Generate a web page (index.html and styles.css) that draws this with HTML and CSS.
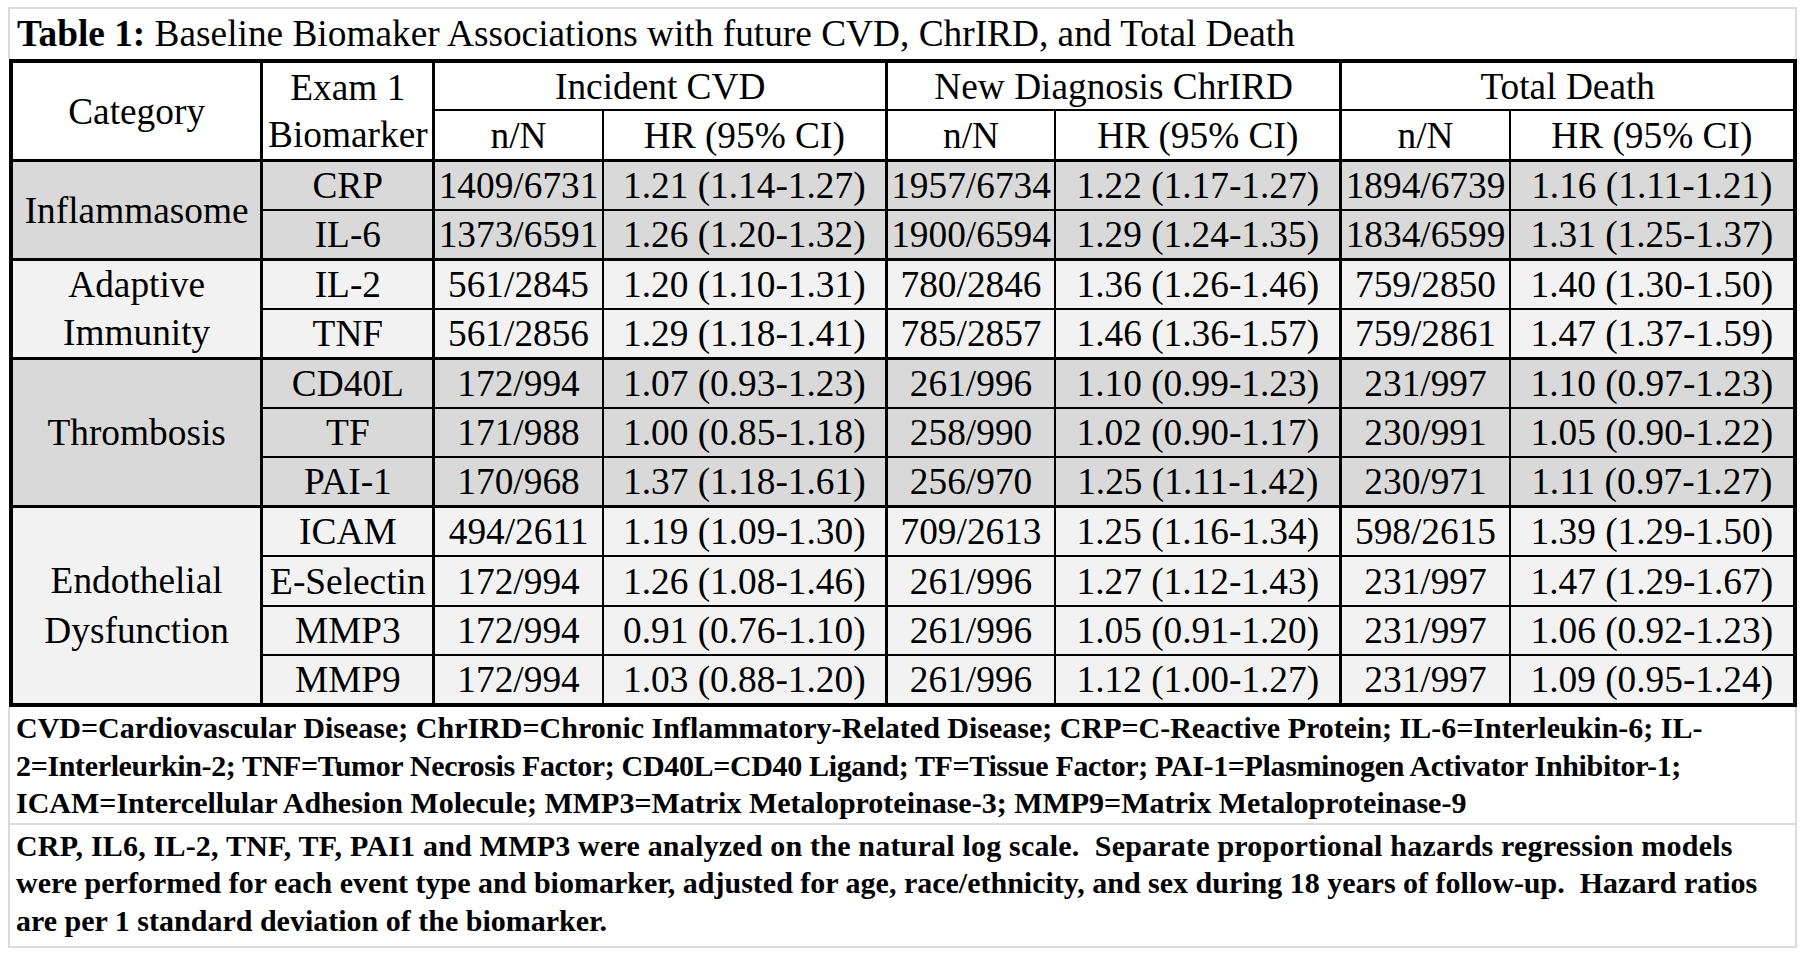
FILE: index.html
```html
<!DOCTYPE html>
<html lang="en">
<head>
<meta charset="utf-8">
<title>Table 1</title>
<link rel="stylesheet" href="styles.css">
</head>
<body>
<div class="sheet">
  <div class="title"><b>Table 1:</b> Baseline Biomaker Associations with future CVD, ChrIRD, and Total Death</div>
  <table class="data">
    <colgroup>
      <col class="c-cat"><col class="c-bio"><col class="c-n"><col class="c-hr"><col class="c-n"><col class="c-hr2"><col class="c-n"><col class="c-hr2">
    </colgroup>
    <thead>
      <tr class="h1">
        <th rowspan="2" class="hend">Category</th>
        <th rowspan="2" class="hend bio">Exam 1<br>Biomarker</th>
        <th colspan="2">Incident CVD</th>
        <th colspan="2">New Diagnosis ChrIRD</th>
        <th colspan="2" class="last">Total Death</th>
      </tr>
      <tr class="h2">
        <th class="minor hend">n/N</th><th class="hend">HR (95% CI)</th>
        <th class="minor hend">n/N</th><th class="hend">HR (95% CI)</th>
        <th class="minor hend">n/N</th><th class="hend last">HR (95% CI)</th>
      </tr>
    </thead>
    <tbody class="dark">
      <tr class="r49">
        <td rowspan="2" class="gend">Inflammasome</td>
        <td>CRP</td><td class="minor">1409/6731</td><td>1.21 (1.14-1.27)</td><td class="minor">1957/6734</td><td>1.22 (1.17-1.27)</td><td class="minor">1894/6739</td><td class="last">1.16 (1.11-1.21)</td>
      </tr>
      <tr class="r50 end">
        <td>IL-6</td><td class="minor">1373/6591</td><td>1.26 (1.20-1.32)</td><td class="minor">1900/6594</td><td>1.29 (1.24-1.35)</td><td class="minor">1834/6599</td><td class="last">1.31 (1.25-1.37)</td>
      </tr>
    </tbody>
    <tbody class="light">
      <tr class="r49">
        <td rowspan="2" class="gend pair">Adaptive<br>Immunity</td>
        <td>IL-2</td><td class="minor">561/2845</td><td>1.20 (1.10-1.31)</td><td class="minor">780/2846</td><td>1.36 (1.26-1.46)</td><td class="minor">759/2850</td><td class="last">1.40 (1.30-1.50)</td>
      </tr>
      <tr class="r50 end">
        <td>TNF</td><td class="minor">561/2856</td><td>1.29 (1.18-1.41)</td><td class="minor">785/2857</td><td>1.46 (1.36-1.57)</td><td class="minor">759/2861</td><td class="last">1.47 (1.37-1.59)</td>
      </tr>
    </tbody>
    <tbody class="dark">
      <tr class="r49">
        <td rowspan="3" class="gend">Thrombosis</td>
        <td>CD40L</td><td class="minor">172/994</td><td>1.07 (0.93-1.23)</td><td class="minor">261/996</td><td>1.10 (0.99-1.23)</td><td class="minor">231/997</td><td class="last">1.10 (0.97-1.23)</td>
      </tr>
      <tr class="r49">
        <td>TF</td><td class="minor">171/988</td><td>1.00 (0.85-1.18)</td><td class="minor">258/990</td><td>1.02 (0.90-1.17)</td><td class="minor">230/991</td><td class="last">1.05 (0.90-1.22)</td>
      </tr>
      <tr class="r50 end">
        <td>PAI-1</td><td class="minor">170/968</td><td>1.37 (1.18-1.61)</td><td class="minor">256/970</td><td>1.25 (1.11-1.42)</td><td class="minor">230/971</td><td class="last">1.11 (0.97-1.27)</td>
      </tr>
    </tbody>
    <tbody class="light">
      <tr class="r49">
        <td rowspan="4" class="gend final multi">Endothelial<br>Dysfunction</td>
        <td>ICAM</td><td class="minor">494/2611</td><td>1.19 (1.09-1.30)</td><td class="minor">709/2613</td><td>1.25 (1.16-1.34)</td><td class="minor">598/2615</td><td class="last">1.39 (1.29-1.50)</td>
      </tr>
      <tr class="r50">
        <td>E-Selectin</td><td class="minor">172/994</td><td>1.26 (1.08-1.46)</td><td class="minor">261/996</td><td>1.27 (1.12-1.43)</td><td class="minor">231/997</td><td class="last">1.47 (1.29-1.67)</td>
      </tr>
      <tr class="r49">
        <td>MMP3</td><td class="minor">172/994</td><td>0.91 (0.76-1.10)</td><td class="minor">261/996</td><td>1.05 (0.91-1.20)</td><td class="minor">231/997</td><td class="last">1.06 (0.92-1.23)</td>
      </tr>
      <tr class="r51 bottom">
        <td>MMP9</td><td class="minor">172/994</td><td>1.03 (0.88-1.20)</td><td class="minor">261/996</td><td>1.12 (1.00-1.27)</td><td class="minor">231/997</td><td class="last">1.09 (0.95-1.24)</td>
      </tr>
    </tbody>
  </table>
  <div class="notes">
    <p class="note">CVD=Cardiovascular Disease; ChrIRD=Chronic Inflammatory-Related Disease; CRP=C-Reactive Protein; IL-6=Interleukin-6; IL-<br><span class="tight">2=Interleurkin-2; TNF=Tumor Necrosis Factor; CD40L=CD40 Ligand; TF=Tissue Factor; PAI-1=Plasminogen Activator Inhibitor-1;</span><br>ICAM=Intercellular Adhesion Molecule; MMP3=Matrix Metaloproteinase-3; MMP9=Matrix Metaloproteinase-9</p>
    <p class="note second"><span class="loose">CRP, IL6, IL-2, TNF, TF, PAI1 and MMP3 were analyzed on the natural log scale.&nbsp; Separate proportional hazards regression models</span><br>were performed for each event type and biomarker, adjusted for age, race/ethnicity, and sex during 18 years of follow-up.&nbsp; Hazard ratios<br>are per 1 standard deviation of the biomarker.</p>
  </div>
</div>
</body>
</html>
```

FILE: styles.css
```css
* {
  box-sizing: border-box;
}

body {
  margin: 0;
  background: #ffffff;
  color: #000000;
  font-family: "Liberation Serif", "Times New Roman", serif;
}

.sheet {
  margin: 7px 0 0 8px;
  width: 1789px;
}

.title {
  height: 52px;
  border: 2px solid #dcdcdc;
  border-bottom: none;
  padding-left: 7px;
  font-size: 37.33px;
  line-height: 49px;
  white-space: nowrap;
}

.data {
  margin-left: 1px;
  width: 1788px;
  table-layout: fixed;
  border-collapse: separate;
  border-spacing: 0;
  border-top: 4px solid #000;
  border-left: 4px solid #000;
  font-size: 37.33px;
}

.c-cat { width: 250px; }
.c-bio { width: 172px; }
.c-n { width: 168px; }
.c-hr { width: 284px; }
.c-hr2 { width: 286px; }

.data th,
.data td {
  padding: 0 1px;
  text-align: center;
  vertical-align: middle;
  font-weight: normal;
  line-height: 43px;
  white-space: nowrap;
  border-right: 3px solid #000;
  border-bottom: 2px solid #000;
}

.data .minor {
  border-right-width: 2px;
}

.data .last {
  border-right-width: 4px;
}

.h1 { height: 48px; }
.h2 { height: 51px; }

.data .hend {
  border-bottom-width: 3px;
}

.data .bio {
  line-height: 47.5px;
}

.data .pair {
  line-height: 48px;
}

.data .multi {
  line-height: 49.5px;
}

.r49 { height: 49px; }
.r50 { height: 50px; }
.r51 { height: 51px; }

.data .end td,
.data .gend {
  border-bottom-width: 3px;
}

.data .bottom td,
.data .gend.final {
  border-bottom-width: 4px;
}

.dark td {
  background: #d9d9d9;
}

.light td {
  background: #f2f2f2;
}

.notes {
  border: 2px solid #dcdcdc;
  border-top: none;
  font-weight: bold;
  font-size: 30px;
  line-height: 37.5px;
}

.note {
  margin: 0;
  padding: 2px 8px 1px 6px;
  white-space: nowrap;
}

.note.second {
  border-top: 2px solid #dcdcdc;
  padding: 2px 8px 7px 6px;
}

.tight {
  letter-spacing: -0.35px;
}

.loose {
  letter-spacing: 0.2px;
}
```
